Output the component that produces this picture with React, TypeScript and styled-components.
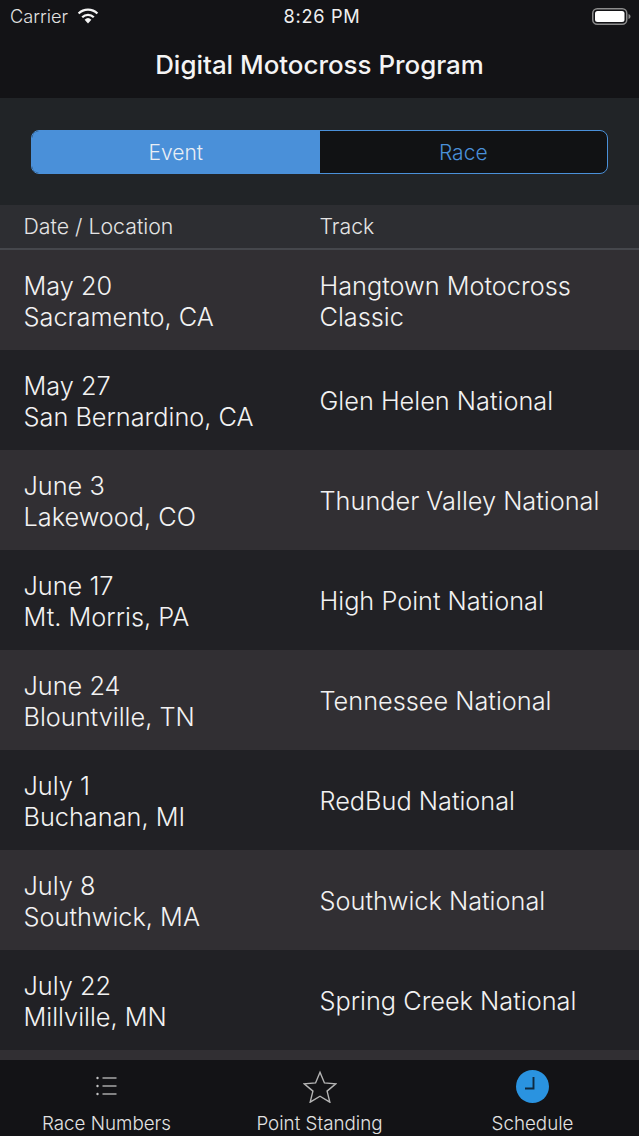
import React from "react";
import styled, { createGlobalStyle } from "styled-components";

const GlobalStyle = createGlobalStyle`
  html, body {
    margin: 0;
    padding: 0;
    background: #212427;
  }
  * {
    box-sizing: border-box;
  }
`;

const Screen = styled.div`
  width: 639px;
  height: 1136px;
  display: flex;
  flex-direction: column;
  overflow: hidden;
  background: #212427;
  color: #f0f0f0;
  font-family: Inter, "Liberation Sans", sans-serif;
`;

const TopBar = styled.div`
  height: 98px;
  flex: none;
  background: #131316;
`;

const StatusBar = styled.div`
  height: 32px;
  display: grid;
  grid-template-columns: 1fr auto 1fr;
  align-items: center;
  padding: 0 8px 0 10px;
  font-size: 18.2px;
  font-weight: 300;
`;

const Carrier = styled.div`
  display: flex;
  align-items: center;
  gap: 9px;
  color: #e2e2e2;
`;

const Clock = styled.div`
  padding-left: 3px;
  font-size: 18.2px;
  font-weight: 400;
  letter-spacing: 0.7px;
`;

const Battery = styled.div`
  justify-self: end;
  display: flex;
  align-items: center;
`;

const Title = styled.h1`
  margin: 0;
  padding-top: 17px;
  font-size: 25.9px;
  line-height: 32px;
  font-weight: 500;
  text-align: center;
  color: #f4f4f4;
`;

const SegmentBar = styled.div`
  height: 107px;
  flex: none;
  padding: 32px 31px 31px;
`;

const Segments = styled.div`
  height: 44px;
  display: flex;
  border: 1.5px solid #4a90d9;
  border-radius: 8px;
  overflow: hidden;
  background: #111214;
`;

const Segment = styled.div<{ $active?: boolean }>`
  flex: 1;
  display: flex;
  align-items: center;
  justify-content: center;
  font-size: 21px;
  font-weight: 300;
  background: ${(p) => (p.$active ? "#4a90d9" : "transparent")};
  color: ${(p) => (p.$active ? "#e8eef5" : "#4a90d9")};
`;

const HeaderRow = styled.div`
  height: 45px;
  flex: none;
  display: grid;
  grid-template-columns: 319.5px 1fr;
  align-items: center;
  padding-bottom: 1px;
  background: #2d2e32;
  border-bottom: 2px solid #45474c;
  font-size: 21.3px;
  font-weight: 300;
  color: #e4e4e4;
`;

const HeaderCell = styled.div<{ $first?: boolean }>`
  padding-left: ${(p) => (p.$first ? "23.5px" : "0")};
`;

const List = styled.div`
  flex: 1;
  min-height: 0;
  overflow: hidden;
`;

const Row = styled.div<{ $odd: boolean }>`
  height: 100px;
  display: grid;
  grid-template-columns: 319.5px 1fr;
  align-items: center;
  padding-top: 2px;
  background: ${(p) => (p.$odd ? "#312f33" : "#212125")};
  font-size: 25.3px;
  font-weight: 300;
  line-height: 31px;
  color: #f2f2f2;
`;

const DateCell = styled.div`
  padding-left: 23.5px;
`;

const TrackCell = styled.div`
  padding: 0 30px 1px 0;
`;

const TabBar = styled.div`
  height: 76px;
  flex: none;
  display: grid;
  grid-template-columns: repeat(3, 1fr);
  background: #131316;
`;

const Tab = styled.div`
  display: flex;
  flex-direction: column;
  align-items: center;
  padding-top: 8px;
  font-size: 18.8px;
  font-weight: 300;
  color: #e2e2e2;
`;

const TabIcon = styled.div`
  height: 36px;
  display: flex;
  align-items: center;
  justify-content: center;
`;

const TabLabel = styled.div`
  margin-top: 9px;
  line-height: 22px;
`;

const rows = [
  { date: "May 20", place: "Sacramento, CA", track: "Hangtown Motocross Classic" },
  { date: "May 27", place: "San Bernardino, CA", track: "Glen Helen National" },
  { date: "June 3", place: "Lakewood, CO", track: "Thunder Valley National" },
  { date: "June 17", place: "Mt. Morris, PA", track: "High Point National" },
  { date: "June 24", place: "Blountville, TN", track: "Tennessee National" },
  { date: "July 1", place: "Buchanan, MI", track: "RedBud National" },
  { date: "July 8", place: "Southwick, MA", track: "Southwick National" },
  { date: "July 22", place: "Millville, MN", track: "Spring Creek National" },
  { date: "", place: "", track: "" },
];

const WifiIcon = () => (
  <svg width="22" height="16" viewBox="0 0 22 16">
    <path d="M11 15.500 7.600 11.700a5 5 0 0 1 6.800 0z" fill="#f4f4f4" />
    <path d="M5.200 9.300a8.300 8.300 0 0 1 11.600 0" fill="none" stroke="#f4f4f4" strokeWidth="2.300" />
    <path d="M1.600 5.500a13.400 13.400 0 0 1 18.800 0" fill="none" stroke="#f4f4f4" strokeWidth="2.300" />
  </svg>
);

const BatteryIcon = () => (
  <svg width="39" height="17" viewBox="0 0 39 17">
    <rect x="0.750" y="0.750" width="34" height="15.500" rx="4.500" fill="none" stroke="#8c8c8c" strokeWidth="1.500" />
    <rect x="3" y="3" width="29.500" height="11" rx="2.500" fill="#fff" />
    <path d="M36.500 6c1.300.4 2 1.300 2 2.500s-.7 2.100-2 2.500z" fill="#8c8c8c" />
  </svg>
);

const ListIcon = () => (
  <svg width="24" height="22" viewBox="0 0 24 22">
    <path d="M7.500 3h14M7.500 11h14M7.500 19h14" fill="none" stroke="#a8a8a8" strokeWidth="1.500" />
    <circle cx="2.500" cy="3" r="1.200" fill="#c4c4c4" />
    <circle cx="2.500" cy="11" r="1.200" fill="#c4c4c4" />
    <circle cx="2.500" cy="19" r="1.200" fill="#c4c4c4" />
  </svg>
);

const StarIcon = () => (
  <svg width="34" height="33" viewBox="0 0 36 34">
    <path
      d="M18 2l4.700 11.200 12 .9-9.200 7.800 2.900 11.700L18 27.300 7.600 33.600l2.900-11.700L1.300 14.100l12-.9z"
      fill="none"
      stroke="#b4b4b4"
      strokeWidth="1.500"
    />
  </svg>
);

const ClockIcon = () => (
  <svg width="33" height="33" viewBox="0 0 33 33">
    <circle cx="16.500" cy="16.500" r="16.500" fill="#2a93e0" />
    <path d="M17.500 7v11.500H9" fill="none" stroke="#0f2a40" strokeWidth="1.900" />
  </svg>
);

const App = () => {
  return (
    <Screen>
      <GlobalStyle />
      <TopBar>
        <StatusBar>
          <Carrier>
            Carrier
            <WifiIcon />
          </Carrier>
          <Clock>8:26 PM</Clock>
          <Battery>
            <BatteryIcon />
          </Battery>
        </StatusBar>
        <Title>Digital Motocross Program</Title>
      </TopBar>
      <SegmentBar>
        <Segments>
          <Segment $active>Event</Segment>
          <Segment>Race</Segment>
        </Segments>
      </SegmentBar>
      <HeaderRow>
        <HeaderCell $first>Date / Location</HeaderCell>
        <HeaderCell>Track</HeaderCell>
      </HeaderRow>
      <List>
        {rows.map((row, i) => (
          <Row key={i} $odd={i % 2 === 0}>
            <DateCell>
              {row.date}
              <br />
              {row.place}
            </DateCell>
            <TrackCell>{row.track}</TrackCell>
          </Row>
        ))}
      </List>
      <TabBar>
        <Tab>
          <TabIcon>
            <ListIcon />
          </TabIcon>
          <TabLabel>Race Numbers</TabLabel>
        </Tab>
        <Tab>
          <TabIcon>
            <StarIcon />
          </TabIcon>
          <TabLabel>Point Standing</TabLabel>
        </Tab>
        <Tab>
          <TabIcon>
            <ClockIcon />
          </TabIcon>
          <TabLabel>Schedule</TabLabel>
        </Tab>
      </TabBar>
    </Screen>
  );
};

export default App;
